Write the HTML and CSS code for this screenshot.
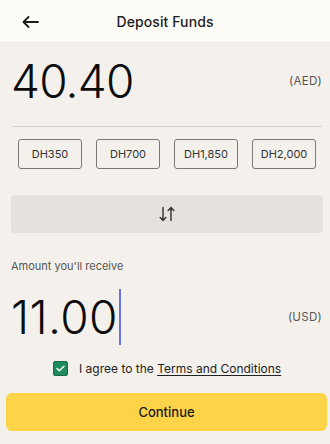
FILE: index.html
```
<!DOCTYPE html>
<html>
<head>
<meta charset="utf-8">
<link rel="stylesheet" href="styles.css">
</head>
<body>
<div class="header">
  <div class="back">
    <svg width="17" height="12" viewBox="0 0 17 12"><path d="M16 6H1.5M6.5 1L1.5 6L6.5 11" fill="none" stroke="#1a1a1a" stroke-width="1.8" stroke-linecap="round" stroke-linejoin="round"/></svg>
  </div>
  <div class="title">Deposit Funds</div>
  <div></div>
</div>
<div class="amount-row">
  <div class="big">40.40</div>
  <div class="cur">(AED)</div>
</div>
<div class="divider"></div>
<div class="chips">
  <div class="chip">DH350</div>
  <div class="chip">DH700</div>
  <div class="chip">DH1,850</div>
  <div class="chip">DH2,000</div>
</div>
<div class="swap">
  <svg width="16" height="16" viewBox="0 0 16 16"><path d="M4 1.5V14.5M1.2 11.6L4 14.5L6.8 11.6M12 14.5V1.5M9.2 4.4L12 1.5L14.8 4.4" fill="none" stroke="#3a3a3a" stroke-width="1.5" stroke-linecap="round" stroke-linejoin="round"/></svg>
</div>
<div class="label">Amount you'll receive</div>
<div class="amount-row2">
  <div class="big2">11.00<span class="caret"></span></div>
  <div class="cur">(USD)</div>
</div>
<div class="agree">
  <span class="check"><svg width="9" height="7" viewBox="0 0 9 7"><path d="M1 3.6L3.3 5.8L8 1.2" fill="none" stroke="#fff" stroke-width="1.4" stroke-linecap="round" stroke-linejoin="round"/></svg></span>
  <span class="agree-text">I agree to the <span class="link">Terms and Conditions</span></span>
</div>
<div class="btn">Continue</div>
</body>
</html>
```
FILE: styles.css
```
* { box-sizing: border-box; }
html, body { margin: 0; padding: 0; }
body {
  width: 330px;
  height: 444px;
  overflow: hidden;
  background: #f4f1ec;
  font-family: Inter, Roboto, "Liberation Sans", sans-serif;
  color: #111;
}
.header {
  height: 43px;
  background: #fdfbf6;
  border-bottom: 1px solid #ece9e3;
  display: grid;
  grid-template-columns: 1fr auto 1fr;
  align-items: center;
}
.back { padding-left: 22px; display: flex; align-items: center; padding-top: 1px; }
.title { font-size: 14px; font-weight: 500; color: #1e1e1e; letter-spacing: 0.1px; }
.amount-row {
  height: 83px;
  padding: 0 8px 8px 11px;
  display: flex;
  align-items: center;
  justify-content: space-between;
}
.big { font-size: 46px; line-height: 56px; font-weight: 300; letter-spacing: -0.8px; color: #0d0d0d; }
.cur { font-size: 11.5px; color: #555; letter-spacing: 0.3px; }
.divider { margin: 0 8px 0 12px; border-top: 1px solid #d6d2cc; }
.chips {
  margin-top: 12px;
  padding: 0 14px 0 18px;
  display: flex;
  justify-content: space-between;
}
.chip {
  width: 64px;
  height: 30px;
  border: 1px solid #7a7772;
  border-radius: 3px;
  display: flex;
  align-items: center;
  justify-content: center;
  font-size: 11px;
  color: #333;
}
.swap {
  margin: 26px 7px 0 11px;
  height: 38px;
  background: #e5e1dc;
  border-radius: 4px;
  display: flex;
  align-items: center;
  justify-content: center;
}
.label {
  margin: 26px 0 0 11px;
  font-size: 11px;
  line-height: 14px;
  color: #555;
}
.amount-row2 {
  margin-top: 15px;
  height: 58px;
  padding: 0 8px 0 11px;
  display: flex;
  align-items: center;
  justify-content: space-between;
}
.big2 { font-size: 46px; line-height: 56px; font-weight: 300; letter-spacing: 0.4px; color: #0d0d0d; display: flex; align-items: center; }
.caret { display: inline-block; width: 2px; height: 56px; background: #6b70e6; margin-left: 1px; }
.agree {
  margin-top: 13px;
  display: flex;
  align-items: center;
  padding-left: 53px;
  height: 18px;
}
.check {
  width: 15px;
  height: 15px;
  background: #1f8a5b;
  border-radius: 2px;
  display: flex;
  align-items: center;
  justify-content: center;
  border: 1px solid #176b46;
}
.agree-text { margin-left: 11px; font-size: 12px; color: #222; }
.link { text-decoration: underline; text-underline-offset: 2px; }
.btn {
  margin: 16px 3px 0 6px;
  height: 38px;
  background: #fdd34a;
  border-radius: 6px;
  display: flex;
  align-items: center;
  justify-content: center;
  font-size: 13px;
  font-weight: 500;
  color: #1a1a1a;
}
```
